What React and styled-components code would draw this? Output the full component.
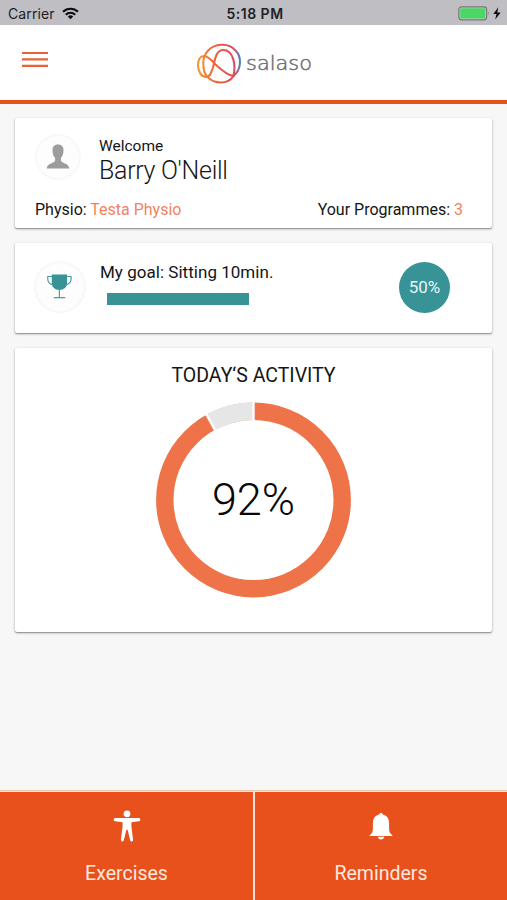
import styled, { createGlobalStyle, ThemeProvider } from "styled-components"

const theme = {
  primary: "#e8501c",
  accent: "#ee7349",
  link: "#f5815f",
  teal: "#389397",
}

const GlobalStyle = createGlobalStyle`
  * {
    box-sizing: border-box;
  }

  body {
    margin: 0;
    background: #f7f7f7;
    color: #151515;
    font-family: Roboto, "Liberation Sans", sans-serif;
  }

  svg {
    display: block;
  }
`

const Screen = styled.div`
  display: flex;
  flex-direction: column;
  width: 100%;
  height: 900px;
  overflow: hidden;
`

const StatusBar = styled.div`
  display: grid;
  grid-template-columns: 1fr auto 1fr;
  align-items: center;
  height: 25px;
  padding: 2px 5px 0 8px;
  background: #bfbec3;
  font-family: Inter, sans-serif;
  font-size: 14px;
  color: #222226;

  .carrier {
    display: flex;
    align-items: center;
    gap: 7px;
    letter-spacing: 0.1px;
  }

  .time {
    font-size: 14px;
    font-weight: 600;
    letter-spacing: 0.5px;
  }

  .battery {
    justify-self: end;
  }
`

const Header = styled.header`
  display: grid;
  grid-template-columns: 1fr auto 1fr;
  height: 79px;
  padding: 0 22px;
  background: white;
  border-bottom: 4px solid ${(prop) => prop.theme.primary};
`

const MenuButton = styled.button`
  align-self: start;
  justify-self: start;
  margin-top: 26px;
  padding: 0;
  background: none;
  border: none;
  cursor: pointer;
`

const Logo = styled.div`
  padding-top: 18px;

  text {
    font-family: "DejaVu Sans", sans-serif;
    font-size: 19.5px;
    font-weight: 200;
  }
`

const Content = styled.main`
  flex: 1;
  display: flex;
  flex-direction: column;
  gap: 15px;
  padding: 14px 15px 0;
`

const Card = styled.section`
  height: ${(prop) => prop.$height}px;
  background: white;
  border-radius: 2px;
  box-shadow: 0 1px 3px rgba(0, 0, 0, 0.28), 0 1px 1px rgba(0, 0, 0, 0.26);
`

const Profile = styled.div`
  display: flex;
  gap: 18px;
  padding: 16px 20px 0;

  .welcome {
    margin: 2px 0 0;
    font-size: 15.5px;
    line-height: 20px;
  }

  .name {
    margin: 0;
    font-size: 25px;
    font-weight: 300;
    line-height: 29px;
    letter-spacing: -0.3px;
  }
`

const Disc = styled.div`
  display: flex;
  align-items: center;
  justify-content: center;
  flex: none;
  width: ${(prop) => prop.$size}px;
  height: ${(prop) => prop.$size}px;
  border: 2px solid #f8f8f8;
  border-radius: 50%;
  background: #fdfdfd;
`

const Details = styled.div`
  display: flex;
  justify-content: space-between;
  padding: 15px 29px 0 20px;
  font-size: 16px;
  line-height: 20px;

  span {
    color: ${(prop) => prop.theme.link};
  }
`

const Goal = styled.div`
  display: flex;
  padding: 18px 42px 0 19px;

  .text {
    flex: 1;
    padding-left: 14px;
  }

  p {
    margin: 0;
    font-size: 17px;
    line-height: 22px;
    letter-spacing: 0.03px;
  }
`

const Progress = styled.div`
  width: 142px;
  height: 12px;
  margin: 10px 0 0 7px;
  background: ${(prop) => prop.theme.teal};
`

const Badge = styled.div`
  display: flex;
  align-items: center;
  justify-content: center;
  width: 51px;
  height: 51px;
  margin-top: 1px;
  padding-bottom: 1px;
  border-radius: 50%;
  background: ${(prop) => prop.theme.teal};
  color: #e6f6f6;
  font-size: 17px;
`

const Activity = styled.div`
  display: flex;
  flex-direction: column;
  align-items: center;

  h2 {
    margin: 16px 0 14px;
    font-size: 19.5px;
    font-weight: 400;
    line-height: 24px;
  }

  text {
    font-size: 45px;
    font-weight: 300;
  }
`

const Footer = styled.nav`
  display: grid;
  grid-template-columns: 253px 1fr;
  gap: 2px;
  height: 110px;
  padding-top: 1px;
  background: #fbe0d5;
  border-top: 1px solid #efc6b6;
`

const Tab = styled.button`
  display: flex;
  flex-direction: column;
  align-items: center;
  padding: 18px 0 0;
  background: ${(prop) => prop.theme.primary};
  border: none;
  color: #ffe9df;
  font-family: inherit;
  font-size: 19.5px;
  line-height: 24px;
  cursor: pointer;

  svg {
    margin-bottom: 20px;
  }
`

const WifiIcon = () => (
  <svg width="17" height="13" viewBox="0 0 17 13" fill="none" stroke="#0c0c0e" strokeWidth="2.2">
    <path d="M1 4.8a10.8 10.8 0 0 1 15 0" />
    <path d="M3.8 7.7a6.7 6.7 0 0 1 9.4 0" />
    <path d="M8.5 12.2 5.8 9.5a3.9 3.9 0 0 1 5.4 0z" fill="#0c0c0e" stroke="none" />
  </svg>
)

const BatteryIcon = () => (
  <svg width="44" height="15" viewBox="0 0 44 15">
    <rect x="0.8" y="0.8" width="27.8" height="13" rx="2.8" fill="#c8c8c9" stroke="#77777b" strokeWidth="1.2" />
    <rect x="2.2" y="2.2" width="25" height="10.2" rx="1" fill="#4bd763" />
    <path d="M30 5.2q1.7 2.1 0 4.2z" fill="#77777b" />
    <path d="M40.3 1.2 35.3 8.1h3.2l-1.3 5.4 5.5-7.1h-3.4z" fill="#0c0c0e" />
  </svg>
)

const MenuIcon = () => (
  <svg width="26" height="17" viewBox="0 0 26 17" stroke="#e96239" strokeWidth="2.2">
    <path d="M0 2h26M0 8.4h26M0 14.8h26" />
  </svg>
)

const LogoMark = () => (
  <svg width="116" height="42" viewBox="0 0 116 42">
    <defs>
      <linearGradient id="ring" gradientUnits="userSpaceOnUse" x1="1" y1="20" x2="45" y2="17">
        <stop offset="0" stopColor="#f39a32" />
        <stop offset="0.4" stopColor="#ee663b" />
        <stop offset="0.8" stopColor="#e64a56" />
        <stop offset="0.91" stopColor="#a2638e" />
        <stop offset="1" stopColor="#3e86c5" />
      </linearGradient>
    </defs>
    <g fill="none" stroke="url(#ring)" strokeWidth="2.1">
      <path d="M37.5 33C45.5 26.5 46 14 39.5 7.6C36 3.5 31 1.8 26.5 1.8C14.5 1.8 7.3 10 7.3 20C7.3 27 8.3 31 11.5 34C15.5 38 19.5 39.5 24.5 39.5C30.5 39.5 35 37 37.5 33z" />
      <path d="M37.5 33C40 22 37.5 7 27.2 7C19.2 7 19 18 16.8 25C15 30 14 34 10.5 34C5.5 34 2 29 2 22C2 16 4.5 13 8 13C12.5 13 16.5 18.5 19.5 21.5C25.5 27 32.5 33 37.5 33z" />
    </g>
    <text
      x="50"
      y="27.4"
      fill="#707073"
      stroke="#707073"
      strokeWidth="0.5"
      textLength="66"
      lengthAdjust="spacingAndGlyphs"
    >
      salaso
    </text>
  </svg>
)

const PersonIcon = () => (
  <svg width="24" height="26" viewBox="0 0 24 26" fill="#9c9c9c">
    <path d="M12 .5c3.8 0 5.7 2.5 5.5 6.2-.1 3-1.1 5.8-2.6 7.3v2.5c0 2.5 8.2 2.6 8.3 7.9H.8c.1-5.3 8.3-5.4 8.3-7.9V14c-1.5-1.5-2.5-4.3-2.6-7.3C6.3 3 8.2.5 12 .5z" />
  </svg>
)

const TrophyIcon = () => (
  <svg width="26" height="28" viewBox="0 0 26 28">
    <path d="M4.8 1.4h15.2v8.8c0 3.8-3 6.5-7.6 6.8-4.6-.3-7.6-3-7.6-6.8z" fill="#389397" />
    <path
      d="M5 3.5H.8c-.5 4.2 1 7.6 5 8.4M19.8 3.5h4.2c.5 4.2-1 7.6-5 8.4M12.4 16v8M6.8 24.6h11.4"
      fill="none"
      stroke="#4a9da0"
      strokeWidth="1.2"
    />
  </svg>
)

const BodyIcon = () => (
  <svg width="28" height="32" viewBox="0 0 28 32" fill="white">
    <circle cx="14" cy="3.8" r="3.4" />
    <path d="M2.3 8h23.4a1.6 1.6 0 0 1 0 3.3L18.4 12.2v4.6l1.7 13a1.45 1.45 0 0 1-2.9.4L14.6 19.7h-1.2L10.8 30.2a1.45 1.45 0 0 1-2.9-.4l1.7-13v-4.6l-7.3-.9a1.6 1.6 0 0 1 0-3.3z" />
  </svg>
)

const BellIcon = () => (
  <svg width="24" height="32" viewBox="0 0 24 32" fill="white">
    <path d="M12 2.9c1 0 1.7.6 1.8 1.5 4.4 1 6.3 4.1 6.3 8.6v5.8c0 3.6 1.2 4.6 3.2 6.5v.6H.7v-.6c2-1.9 3.2-2.9 3.2-6.5V13c0-4.5 1.9-7.6 6.3-8.6.1-.9.8-1.5 1.8-1.5zM8.8 26.8h6.4c-.4 1.8-1.5 2.8-3.2 2.8s-2.8-1-3.2-2.8z" />
  </svg>
)

const RADIUS = 88.7

const Donut = ({ percent }) => {
  // the remaining slice ends at twelve o'clock, with a thin white line on each side
  const angle = -(100 - percent) * 3.6
  return (
    <svg width="196" height="196" viewBox="-97.5 -98 196 196">
      <circle r={RADIUS} fill="none" stroke={theme.accent} strokeWidth="17.4" />
      <circle
        r={RADIUS}
        fill="none"
        stroke="#e6e6e6"
        strokeWidth="18"
        pathLength="100"
        strokeDasharray={`${100 - percent} ${percent}`}
        transform={`rotate(${angle - 90})`}
      />
      <g stroke="white" strokeWidth="2.4">
        <path d="M0-78V-98" />
        <path d="M0-78V-98" transform={`rotate(${angle})`} />
      </g>
      <text x="0" y="15" textAnchor="middle" fill="#080808">
        {percent}%
      </text>
    </svg>
  )
}

const App = () => (
  <ThemeProvider theme={theme}>
    <GlobalStyle />
    <Screen>
      <StatusBar>
        <div className="carrier">
          Carrier <WifiIcon />
        </div>
        <div className="time">5:18 PM</div>
        <div className="battery">
          <BatteryIcon />
        </div>
      </StatusBar>
      <Header>
        <MenuButton aria-label="Menu">
          <MenuIcon />
        </MenuButton>
        <Logo>
          <LogoMark />
        </Logo>
      </Header>
      <Content>
        <Card $height={110}>
          <Profile>
            <Disc $size={46}>
              <PersonIcon />
            </Disc>
            <div>
              <p className="welcome">Welcome</p>
              <p className="name">Barry O'Neill</p>
            </div>
          </Profile>
          <Details>
            <div>
              Physio: <span>Testa Physio</span>
            </div>
            <div>
              Your Programmes: <span>3</span>
            </div>
          </Details>
        </Card>
        <Card $height={90}>
          <Goal>
            <Disc $size={52}>
              <TrophyIcon />
            </Disc>
            <div className="text">
              <p>My goal: Sitting 10min.</p>
              <Progress />
            </div>
            <Badge>50%</Badge>
          </Goal>
        </Card>
        <Card $height={284}>
          <Activity>
            <h2>TODAY‘S ACTIVITY</h2>
            <Donut percent={92} />
          </Activity>
        </Card>
      </Content>
      <Footer>
        <Tab>
          <BodyIcon />
          Exercises
        </Tab>
        <Tab>
          <BellIcon />
          Reminders
        </Tab>
      </Footer>
    </Screen>
  </ThemeProvider>
)

export default App
